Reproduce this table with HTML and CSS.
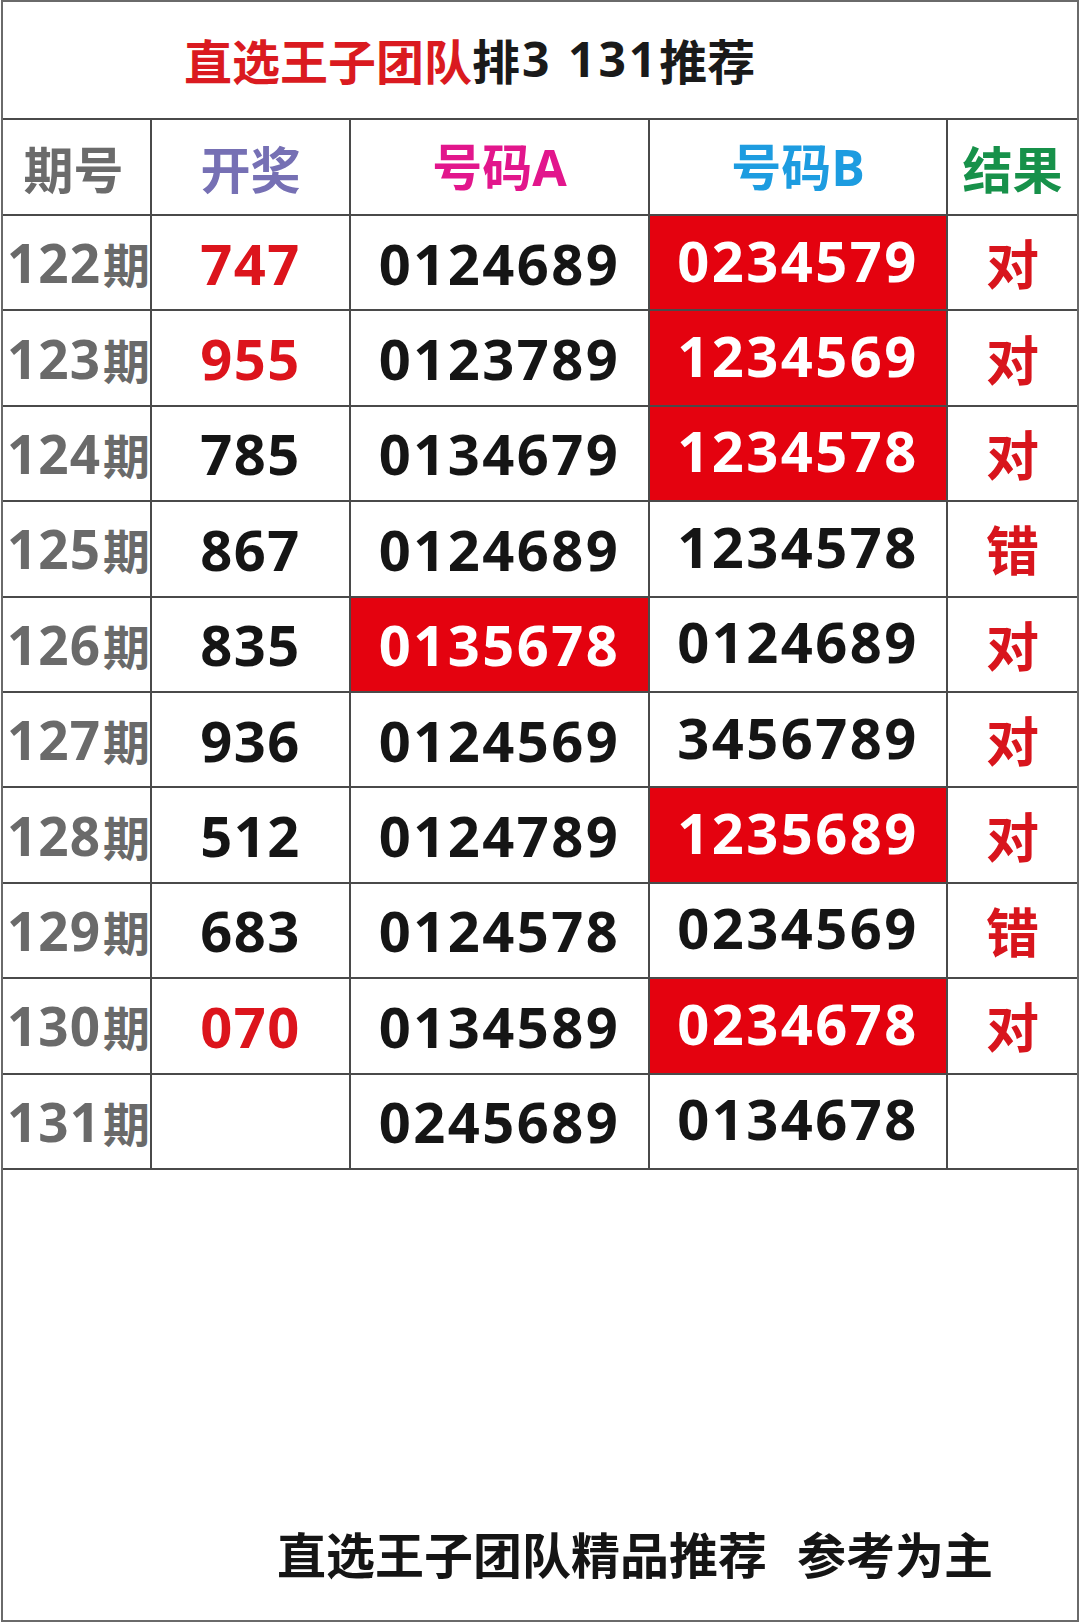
FILE: index.html
```html
<!DOCTYPE html>
<html lang="zh-CN">
<head>
<meta charset="utf-8">
<title>直选王子团队排3 131推荐</title>
<link rel="stylesheet" href="styles.css">
</head>
<body>
<div class="frame">
  <div class="title"><span class="title-red">直选王子团队</span><span class="title-black">排</span><span class="title-num">3 131</span><span class="title-black">推荐</span></div>
  <div class="grid">
    <div class="cell head h-qi">期号</div>
    <div class="cell head h-kj">开奖</div>
    <div class="cell head h-a">号码A</div>
    <div class="cell head h-b">号码B</div>
    <div class="cell head h-jg">结果</div>

    <div class="cell qi">122<span class="qi-c">期</span></div>
    <div class="cell kj red-txt">747</div>
    <div class="cell code">0124689</div>
    <div class="cell code code-b hit">0234579</div>
    <div class="cell res">对</div>

    <div class="cell qi">123<span class="qi-c">期</span></div>
    <div class="cell kj red-txt">955</div>
    <div class="cell code">0123789</div>
    <div class="cell code code-b hit">1234569</div>
    <div class="cell res">对</div>

    <div class="cell qi">124<span class="qi-c">期</span></div>
    <div class="cell kj">785</div>
    <div class="cell code">0134679</div>
    <div class="cell code code-b hit">1234578</div>
    <div class="cell res">对</div>

    <div class="cell qi">125<span class="qi-c">期</span></div>
    <div class="cell kj">867</div>
    <div class="cell code">0124689</div>
    <div class="cell code code-b">1234578</div>
    <div class="cell res">错</div>

    <div class="cell qi">126<span class="qi-c">期</span></div>
    <div class="cell kj">835</div>
    <div class="cell code hit">0135678</div>
    <div class="cell code code-b">0124689</div>
    <div class="cell res">对</div>

    <div class="cell qi">127<span class="qi-c">期</span></div>
    <div class="cell kj">936</div>
    <div class="cell code">0124569</div>
    <div class="cell code code-b">3456789</div>
    <div class="cell res">对</div>

    <div class="cell qi">128<span class="qi-c">期</span></div>
    <div class="cell kj">512</div>
    <div class="cell code">0124789</div>
    <div class="cell code code-b hit">1235689</div>
    <div class="cell res">对</div>

    <div class="cell qi">129<span class="qi-c">期</span></div>
    <div class="cell kj">683</div>
    <div class="cell code">0124578</div>
    <div class="cell code code-b">0234569</div>
    <div class="cell res">错</div>

    <div class="cell qi">130<span class="qi-c">期</span></div>
    <div class="cell kj red-txt">070</div>
    <div class="cell code">0134589</div>
    <div class="cell code code-b hit">0234678</div>
    <div class="cell res">对</div>

    <div class="cell qi">131<span class="qi-c">期</span></div>
    <div class="cell kj"></div>
    <div class="cell code">0245689</div>
    <div class="cell code code-b">0134678</div>
    <div class="cell res"></div>
  </div>
  <div class="footer"><span class="foot-text">直选王子团队精品推荐</span><span class="foot-text">参考为主</span></div>
</div>
</body>
</html>
```

FILE: styles.css
```css
html, body {
  margin: 0;
  padding: 0;
  background: #ffffff;
}

body {
  font-family: "Open Sans", "Noto Sans CJK SC", sans-serif;
  font-weight: 700;
}

.frame {
  box-sizing: border-box;
  width: 1078px;
  height: 1622px;
  margin: 0 1px 1px 1px;
  border: 2px solid #6a6a6a;
  display: flex;
  flex-direction: column;
}

.title {
  box-sizing: border-box;
  height: 118px;
  border-bottom: 2px solid #4a4a4a;
  display: flex;
  align-items: center;
  padding-left: 181px;
  padding-bottom: 2px;
  font-family: "Noto Sans CJK SC", sans-serif;
  font-size: 48px;
  line-height: 1;
  white-space: pre;
}

.title-red {
  color: #da1a20;
}

.title-black {
  color: #1a1a1a;
}

.title-num {
  color: #1a1a1a;
  font-family: "Open Sans", "Noto Sans CJK SC", sans-serif;
  letter-spacing: 3px;
  padding-left: 2px;
}

.grid {
  display: grid;
  grid-template-columns: 149px 199px 299px 298px 1fr;
  grid-template-rows: 96px;
  grid-auto-rows: 95.4px;
}

.cell {
  box-sizing: border-box;
  border-right: 2px solid #4a4a4a;
  border-bottom: 2px solid #4a4a4a;
  display: flex;
  align-items: center;
  justify-content: center;
  line-height: 1;
  white-space: nowrap;
  color: #151515;
}

.cell:nth-child(5n) {
  border-right: none;
}

.res {
  border-right: 2px solid #4a4a4a;
}

.head {
  font-family: "Noto Sans CJK SC", sans-serif;
  font-size: 50px;
}

.head.h-a, .head.h-b {
  font-family: "Open Sans", "Noto Sans CJK SC", sans-serif;
}

.h-qi { color: #6b6b6b; padding-right: 6px; }
.h-kj { color: #7670b4; }
.h-a { color: #e2168c; }
.h-b { color: #1d9ce0; }
.h-jg { color: #17914a; }

.qi {
  color: #6a6a6a;
  font-size: 53px;
  letter-spacing: 1px;
  padding-left: 4px;
}

.qi-c {
  font-family: "Noto Sans CJK SC", sans-serif;
  font-size: 47px;
  margin-left: 2px;
  letter-spacing: 0;
}

.kj {
  font-size: 56px;
  letter-spacing: 1.5px;
}

.red-txt {
  color: #dc141c;
}

.code {
  font-size: 56px;
  letter-spacing: 2.5px;
}

.code-b {
  padding-bottom: 6px;
}

.hit {
  background: #e4020f;
  color: #ffffff;
}

.res {
  font-family: "Noto Sans CJK SC", sans-serif;
  font-size: 53px;
  color: #d8151d;
}

.footer {
  flex: 1;
  display: flex;
  align-items: flex-end;
  gap: 30px;
  padding-left: 274px;
  padding-bottom: 43px;
  font-family: "Noto Sans CJK SC", sans-serif;
  font-size: 49px;
  line-height: 49px;
  color: #151515;
}
```
